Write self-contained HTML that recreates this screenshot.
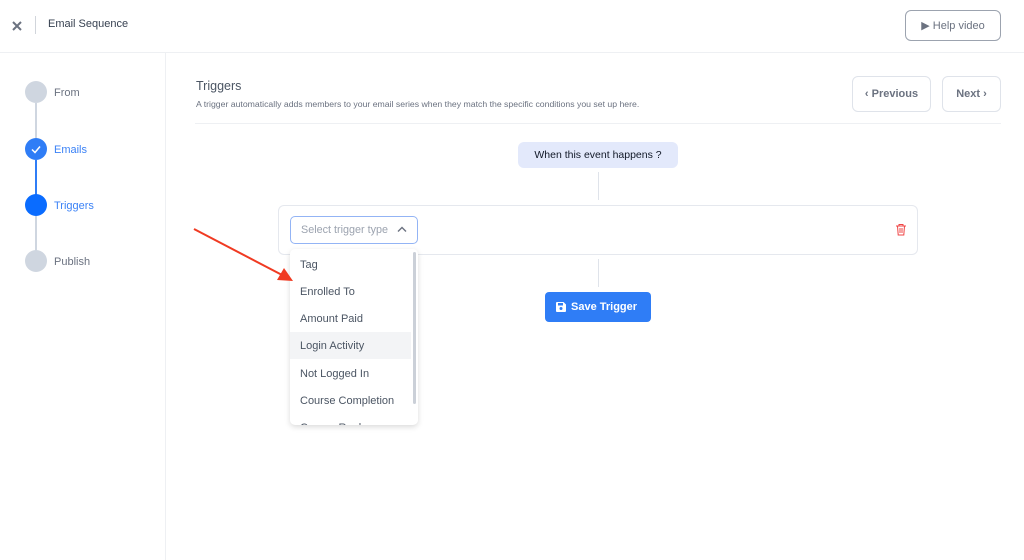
<!DOCTYPE html><html><head><style>
body{margin:0;width:1024px;height:560px;background:#fff;font-family:"Liberation Sans",sans-serif;position:relative;overflow:hidden;color:#374151}
.a{position:absolute}
.btn{position:absolute;border:1px solid #dfe3ea;border-radius:6px;font-size:11px;font-weight:bold;color:#6b7280;display:flex;align-items:center;justify-content:center;box-sizing:border-box}
.c{position:absolute;left:25px;width:22px;height:22px;border-radius:50%;background:#cfd6e0}
.l{position:absolute;left:54px;font-size:11px;color:#6b7280}
.it{position:absolute;left:0;width:121px;height:27px;padding-left:10px;box-sizing:border-box;font-size:11px;color:#4b5563;line-height:28px}
</style></head><body>
<svg class="a" style="left:12px;top:21px" width="10" height="10" viewBox="0 0 10 10"><path d="M1 1L9 9M9 1L1 9" stroke="#6b7280" stroke-width="2"/></svg>
<div class="a" style="left:35px;top:16px;width:1px;height:18px;background:#d1d5db"></div>
<div class="a" style="left:48px;top:18px;font-size:11px;color:#374151">Email Sequence</div>
<div class="btn" style="left:905px;top:10px;width:96px;height:31px;border-color:#9ca3af;color:#6b7280;font-weight:normal">▶ Help video</div>
<div class="a" style="left:0;top:52px;width:1024px;height:1px;background:#eef0f3"></div>
<div class="a" style="left:165px;top:52px;width:1px;height:508px;background:#eef0f3"></div>
<div class="a" style="left:35px;top:103px;width:2px;height:35px;background:#cfd6e0"></div>
<div class="a" style="left:35px;top:160px;width:2px;height:35px;background:#2f7df6"></div>
<div class="a" style="left:35px;top:216px;width:2px;height:35px;background:#cfd6e0"></div>
<div class="c" style="top:81px"></div>
<div class="c" style="top:138px;background:#2f7df6"><svg width="22" height="22" viewBox="0 0 22 22"><path d="M7 11.5l3 3 5-6" fill="none" stroke="#fff" stroke-width="1.5"/></svg></div>
<div class="c" style="top:194px;background:#0a6cff"></div>
<div class="c" style="top:250px"></div>
<div class="l" style="top:87px">From</div>
<div class="l" style="top:144px;color:#3b82f6">Emails</div>
<div class="l" style="top:200px;color:#3b82f6">Triggers</div>
<div class="l" style="top:256px">Publish</div>
<div class="a" style="left:196px;top:79px;font-size:12.5px;color:#4b5563">Triggers</div>
<div class="a" style="left:196px;top:99px;font-size:8.7px;color:#6b7280">A trigger automatically adds members to your email series when they match the specific conditions you set up here.</div>
<div class="btn" style="left:852px;top:76px;width:79px;height:36px">‹ Previous</div>
<div class="btn" style="left:942px;top:76px;width:59px;height:36px">Next ›</div>
<div class="a" style="left:195px;top:123px;width:806px;height:1px;background:#eef0f3"></div>
<div class="a" style="left:518px;top:142px;width:160px;height:26px;background:#e3e9fb;border-radius:6px;font-size:10.5px;color:#111827;text-align:center;line-height:27px">When this event happens ?</div>
<div class="a" style="left:598px;top:172px;width:1px;height:28px;background:#dfe3ea"></div>
<div class="a" style="left:278px;top:205px;width:640px;height:50px;border:1px solid #e5e8ee;border-radius:6px;box-sizing:border-box"></div>
<div class="a" style="left:290px;top:216px;width:128px;height:28px;border:1px solid #93b4f5;border-radius:5px;box-sizing:border-box;font-size:10.8px;color:#9ca3af;line-height:27px;padding-left:10px">Select trigger type</div>
<svg class="a" style="left:397px;top:226px" width="10" height="7" viewBox="0 0 10 7"><path d="M1 5.5L5 1.5L9 5.5" fill="none" stroke="#6b7280" stroke-width="1.4"/></svg>
<svg class="a" style="left:895px;top:223px" width="12" height="13" viewBox="0 0 12 13"><path d="M1 3h10M4 3V1.5h4V3M2.5 3l.7 9h5.6l.7-9M5 5v5M7 5v5" fill="none" stroke="#ef4444" stroke-width="1"/></svg>
<div class="a" style="left:598px;top:259px;width:1px;height:28px;background:#dfe3ea"></div>
<div class="a" style="left:545px;top:292px;width:106px;height:30px;background:#2f7df6;border-radius:4px;color:#fff;font-size:11px;font-weight:bold;line-height:30px;padding-left:26px;box-sizing:border-box">Save Trigger</div>
<svg class="a" style="left:556px;top:302px" width="10" height="10" viewBox="0 0 10 10"><path d="M0 1a1 1 0 011-1h6.5L10 2.5V9a1 1 0 01-1 1H1a1 1 0 01-1-1z" fill="#fff"/><rect x="2" y="1" width="5" height="2.5" fill="#2f7df6"/><circle cx="5" cy="6.5" r="1.5" fill="#2f7df6"/></svg>
<div class="a" style="left:290px;top:249px;width:128px;height:176px;background:#fff;border-radius:5px;box-shadow:0 2px 6px rgba(0,0,0,.15);overflow:hidden">
<div class="it" style="top:2px">Tag</div>
<div class="it" style="top:29px">Enrolled To</div>
<div class="it" style="top:56px">Amount Paid</div>
<div class="it" style="top:83px;background:#f3f4f6">Login Activity</div>
<div class="it" style="top:111px">Not Logged In</div>
<div class="it" style="top:138px">Course Completion</div>
<div class="it" style="top:165px">Course Rank</div>
<div class="a" style="left:123px;top:3px;width:3px;height:152px;background:#cbd0d8;border-radius:2px"></div>
</div>
<svg class="a" style="left:0;top:0" width="1024" height="560"><line x1="194" y1="229" x2="284" y2="276" stroke="#f03a22" stroke-width="2"/><path d="M293 281 L277 280 L284 268 Z" fill="#f03a22"/></svg>
</body></html>
